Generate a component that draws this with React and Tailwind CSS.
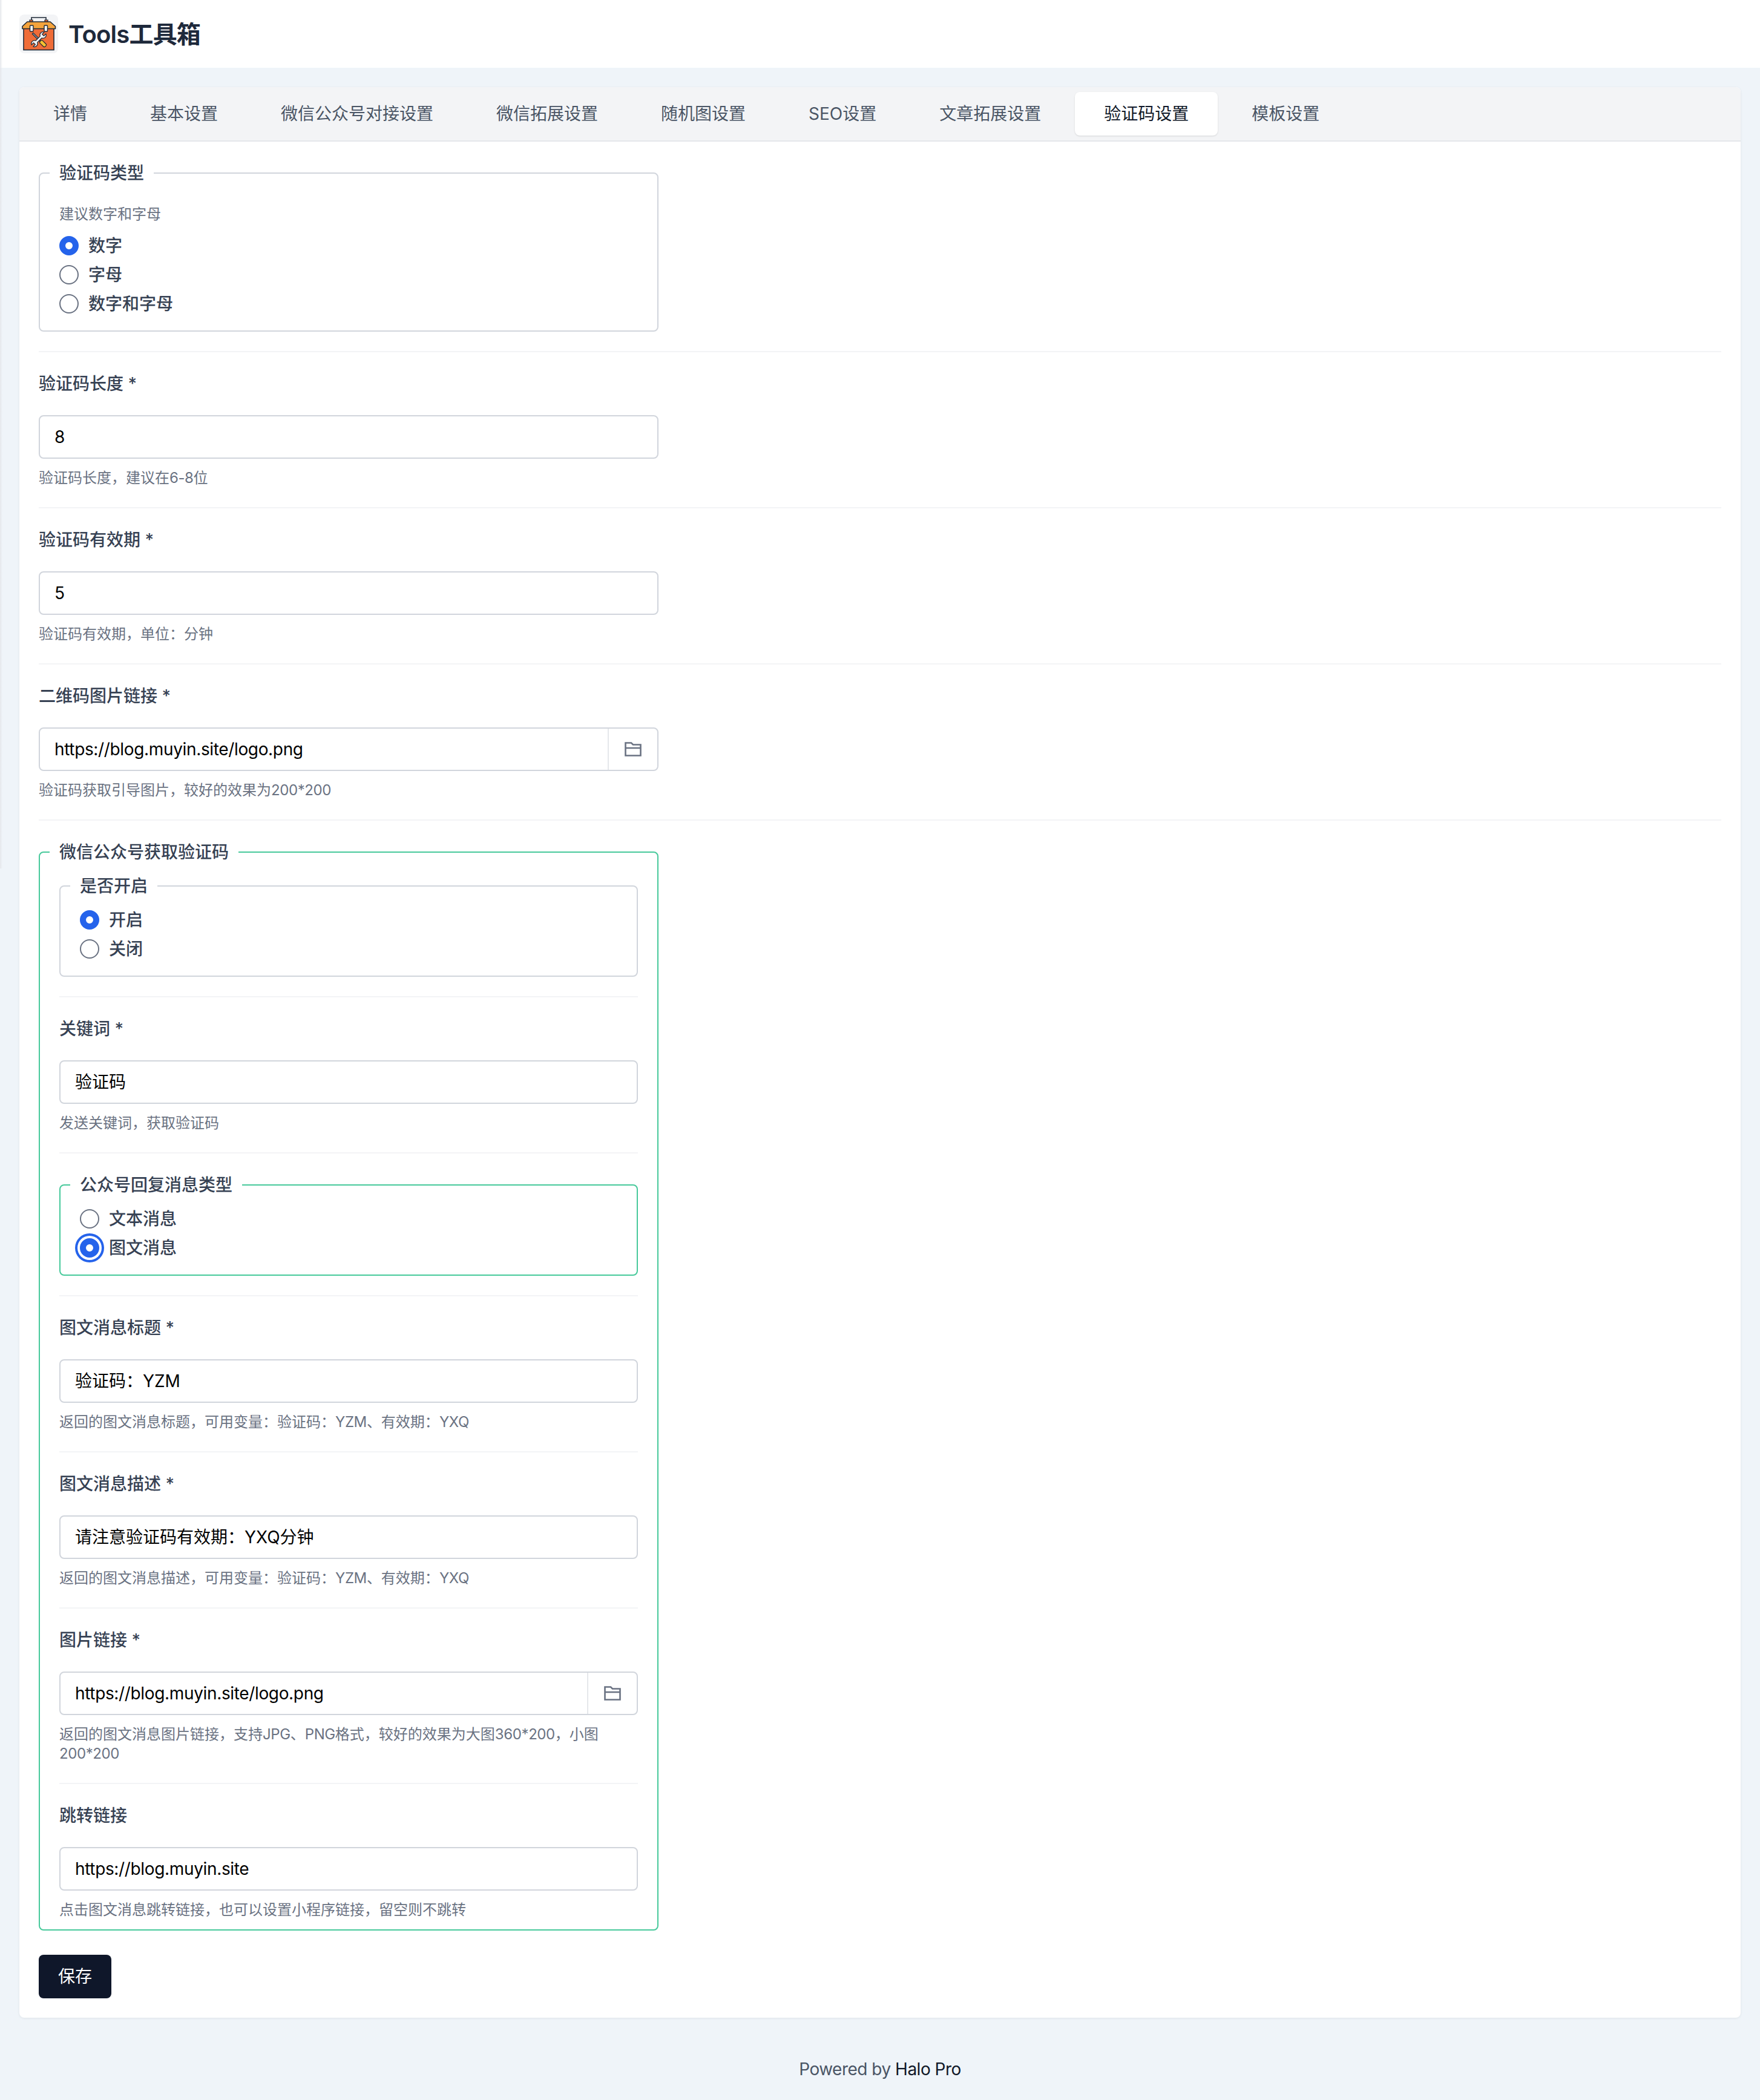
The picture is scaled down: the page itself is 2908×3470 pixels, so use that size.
import React from "react";

const tabs = [
  "详情",
  "基本设置",
  "微信公众号对接设置",
  "微信拓展设置",
  "随机图设置",
  "SEO设置",
  "文章拓展设置",
  "验证码设置",
  "模板设置",
];

const ToolboxLogo = () => (
  <svg viewBox="0 0 64 64" className="w-16 h-16 rounded-lg bg-[#f3f4f6]">
    <path d="M20 12V5h24v7" fill="none" stroke="#1f2937" strokeWidth="1.6" />
    <path d="M17 12V9h5v3zM42 12V9h5v3z" fill="#ef6c38" stroke="#1f2937" strokeWidth="1.2" />
    <rect x="7" y="23" width="50" height="35.5" fill="#ef6c38" stroke="#1f2937" strokeWidth="1.6" />
    <path d="M13 12h38l8.5 7.500v4H5v-4z" fill="#f5a33c" stroke="#1f2937" strokeWidth="1.6" strokeLinejoin="round" />
    <rect x="17.500" y="18" width="5.500" height="10" rx="1" fill="#f3f4f6" stroke="#1f2937" strokeWidth="1.400" />
    <rect x="41" y="18" width="5.500" height="10" rx="1" fill="#f3f4f6" stroke="#1f2937" strokeWidth="1.400" />
    {/* screwdriver */}
    <g transform="translate(32 41) rotate(-45)" stroke="#1f2937" strokeWidth="1.200">
      <rect x="-1.200" y="-14" width="2.400" height="18" fill="#9ca3af" />
      <rect x="-3" y="4" width="6" height="12" rx="2" fill="#f6c12f" />
    </g>
    {/* wrench */}
    <g transform="translate(32 41) rotate(45)">
      <path
        d="M-2 -5.200A5.200 5.200 0 0 1 -2 -14.800V-10H2V-14.800A5.200 5.200 0 0 1 2 -5.200V5.200A5.200 5.200 0 0 1 2 14.800V10H-2V14.800A5.200 5.200 0 0 1 -2 5.200Z"
        fill="#f3f4f6"
        stroke="#1f2937"
        strokeWidth="1.200"
        strokeLinejoin="round"
      />
    </g>
  </svg>
);

const FolderIcon = () => (
  <svg viewBox="0 0 28 24" className="w-[28px] h-[24px] text-gray-500" fill="none" stroke="currentColor" strokeWidth="2.600">
    <path d="M1.500 1.500h9.500l3 3h12.500v18h-25z" />
    <path d="M1.500 10h25" />
  </svg>
);

// latin runs come out a bit narrower than the cjk around them
const Help = ({ text }) => (
  <p className="mt-4 text-[24px] leading-8 text-gray-500">
    {text.split(/([A-Za-z0-9*-]+)/).map((part, i) =>
      i % 2 ? (
        <span key={i} className="tracking-[-0.4px]">
          {part}
        </span>
      ) : (
        part
      )
    )}
  </p>
);

const Field = ({ label, value, help, attach, last }) => (
  <div className={last ? "pt-8" : "py-8 border-b-2 border-gray-100"}>
    <label className="block mb-8 text-[28px] leading-10 font-medium text-gray-700">{label}</label>
    <div className="flex h-[72px] rounded-lg border-2 border-gray-300 bg-white overflow-hidden">
      <input
        readOnly
        value={value}
        className={`flex-1 min-w-0 px-[24px] text-[28px] text-black outline-none ${
          value.startsWith("https") ? "tracking-[-0.35px]" : ""
        }`}
      />
      {attach && (
        <button type="button" className="w-[82px] flex items-center justify-center border-l-2 border-gray-200">
          <FolderIcon />
        </button>
      )}
    </div>
    <Help text={help} />
  </div>
);

const Radio = ({ label, checked, focused }) => (
  <label className="flex items-center gap-4 h-12 text-[28px] leading-10 font-medium text-gray-700">
    <input
      type="radio"
      readOnly
      checked={checked}
      className={`appearance-none w-8 h-8 rounded-full bg-white ${
        checked ? "border-[10px] border-[#2563eb]" : "border-2 border-gray-500"
      } ${focused ? "shadow-[0_0_0_4px_#fff,0_0_0_8px_#2563eb]" : ""}`}
    />
    <span>{label}</span>
  </label>
);

const Group = ({ legend, active, className = "", children }) => (
  <fieldset
    className={`rounded-lg border-2 px-8 ${active ? "border-[#47c99b]" : "border-gray-300"} ${className}`}
  >
    <legend className="-ml-4 px-4 text-[28px] leading-10 font-medium text-gray-700">{legend}</legend>
    {children}
  </fieldset>
);

export default function App() {
  return (
    <div className="relative min-h-screen bg-[#eff4f9] [font-family:Inter,'Noto_Sans_CJK_SC',sans-serif]">
      <div className="absolute left-0 top-0 w-1 h-[1435px] bg-gradient-to-r from-[#e5e7eb] to-transparent" />

      <header className="flex items-center gap-[17px] h-[112px] pl-8 bg-white">
        <ToolboxLogo />
        <h1 className="mt-[2px] text-[40px] leading-[56px] font-semibold tracking-[-0.8px] text-[#1e293b]">
          Tools工具箱
        </h1>
      </header>

      <main className="mx-8 mt-8 rounded-lg bg-white shadow-[0_1px_4px_rgba(0,0,0,0.07)] overflow-hidden">
        <nav className="flex gap-2 px-2 py-2 bg-gray-100 border-b-2 border-gray-200">
          {tabs.map((t) => (
            <div
              key={t}
              className={`px-12 py-4 rounded-lg text-[28px] leading-10 ${
                t === "验证码设置" ? "bg-white text-gray-900 shadow-sm" : "text-gray-600"
              }`}
            >
              {t}
            </div>
          ))}
        </nav>

        <form className="px-8 pb-8">
          <div className="pt-8 pb-8 border-b-2 border-gray-100">
            <Group legend="验证码类型" className="w-[1024px] pb-5">
              <p className="mt-8 mb-3 text-[24px] leading-8 text-gray-500">建议数字和字母</p>
              <Radio label="数字" checked />
              <Radio label="字母" />
              <Radio label="数字和字母" />
            </Group>
          </div>

          <div className="w-[1024px]">
            <Field label="验证码长度 *" value="8" help="验证码长度，建议在6-8位" />
          </div>
          <div className="border-b-2 border-gray-100 -mt-[2px]" />
          <div className="w-[1024px]">
            <Field label="验证码有效期 *" value="5" help="验证码有效期，单位：分钟" />
          </div>
          <div className="border-b-2 border-gray-100 -mt-[2px]" />
          <div className="w-[1024px]">
            <Field
              label="二维码图片链接 *"
              value="https://blog.muyin.site/logo.png"
              help="验证码获取引导图片，较好的效果为200*200"
              attach
            />
          </div>
          <div className="border-b-2 border-gray-100 -mt-[2px]" />

          <div className="pt-8 w-[1024px]">
            <Group legend="微信公众号获取验证码" active className="pb-4">
              <div className="pt-4 pb-8 border-b-2 border-gray-100">
                <Group legend="是否开启" className="pb-5">
                  <div className="pt-3">
                    <Radio label="开启" checked />
                    <Radio label="关闭" />
                  </div>
                </Group>
              </div>

              <Field label="关键词 *" value="验证码" help="发送关键词，获取验证码" />

              <div className="py-8 border-b-2 border-gray-100">
                <Group legend="公众号回复消息类型" active className="pb-5">
                  <div className="pt-3">
                    <Radio label="文本消息" />
                    <Radio label="图文消息" checked focused />
                  </div>
                </Group>
              </div>

              <Field
                label="图文消息标题 *"
                value="验证码：YZM"
                help="返回的图文消息标题，可用变量：验证码：YZM、有效期：YXQ"
              />
              <Field
                label="图文消息描述 *"
                value="请注意验证码有效期：YXQ分钟"
                help="返回的图文消息描述，可用变量：验证码：YZM、有效期：YXQ"
              />
              <Field
                label="图片链接 *"
                value="https://blog.muyin.site/logo.png"
                help="返回的图文消息图片链接，支持JPG、PNG格式，较好的效果为大图360*200，小图200*200"
                attach
              />
              <Field
                label="跳转链接"
                value="https://blog.muyin.site"
                help="点击图文消息跳转链接，也可以设置小程序链接，留空则不跳转"
                last
              />
            </Group>
          </div>

          <button type="button" className="mt-10 w-[120px] h-[72px] rounded-lg bg-[#0f172a] text-[28px] text-white">
            保存
          </button>
        </form>
      </main>

      <footer className="pt-[65px] pb-[31px] text-center text-[28px] leading-10 tracking-[-0.5px] text-gray-600">
        Powered by <span className="text-gray-900">Halo Pro</span>
      </footer>
    </div>
  );
}
